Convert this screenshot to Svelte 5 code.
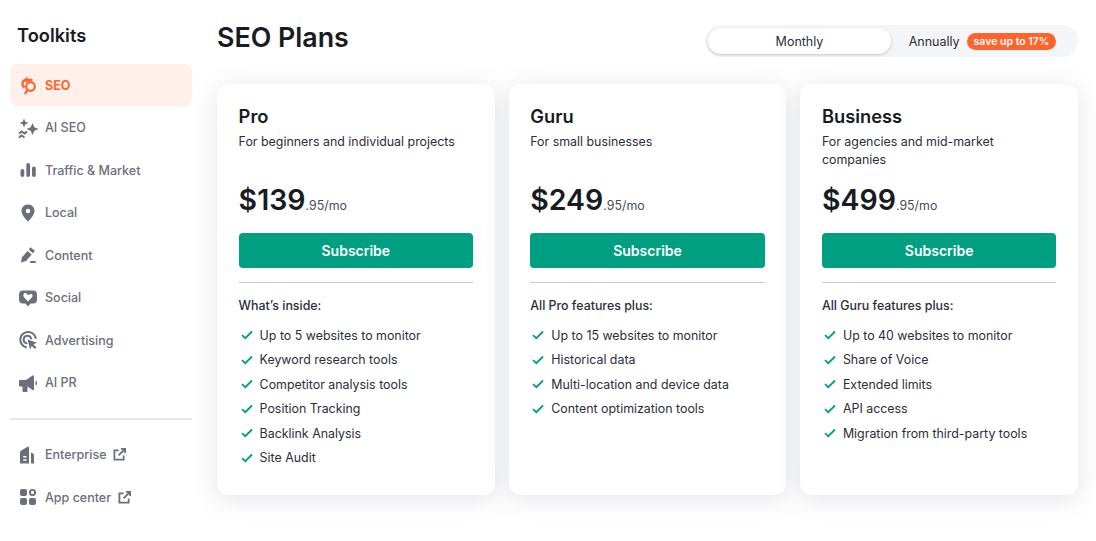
<script lang="ts">
  type Plan = { name: string; desc: string; price: string; lead: string; features: string[] };

  const nav = [
    { id: 'seo', label: 'SEO' },
    { id: 'ai', label: 'AI SEO' },
    { id: 'traffic', label: 'Traffic & Market' },
    { id: 'local', label: 'Local' },
    { id: 'content', label: 'Content' },
    { id: 'social', label: 'Social' },
    { id: 'ads', label: 'Advertising' },
    { id: 'pr', label: 'AI PR' }
  ];
  const extras = [
    { id: 'enterprise', label: 'Enterprise' },
    { id: 'apps', label: 'App center' }
  ];

  const plans: Plan[] = [
    {
      name: 'Pro',
      desc: 'For beginners and individual projects',
      price: '$139',
      lead: 'What’s inside:',
      features: ['Up to 5 websites to monitor', 'Keyword research tools', 'Competitor analysis tools', 'Position Tracking', 'Backlink Analysis', 'Site Audit']
    },
    {
      name: 'Guru',
      desc: 'For small businesses',
      price: '$249',
      lead: 'All Pro features plus:',
      features: ['Up to 15 websites to monitor', 'Historical data', 'Multi-location and device data', 'Content optimization tools']
    },
    {
      name: 'Business',
      desc: 'For agencies and mid-market companies',
      price: '$499',
      lead: 'All Guru features plus:',
      features: ['Up to 40 websites to monitor', 'Share of Voice', 'Extended limits', 'API access', 'Migration from third-party tools']
    }
  ];
</script>

{#snippet icon(id: string)}
  <svg class="ico" width="22" height="22" viewBox="0 0 22 22" aria-hidden="true">
    {#if id === 'seo'}
      <circle cx="13.500" cy="12.500" r="4.300" fill="none" stroke="currentColor" stroke-width="2.200" />
      <path d="M10.500 16.200l-2 3" fill="none" stroke="currentColor" stroke-width="2.400" stroke-linecap="round" />
      <path d="M7.500 13.500C4 11 5 6 9.500 6h6" fill="none" stroke="currentColor" stroke-width="2.300" />
      <path d="M10.500 2.500L6.500 6l4 3.500z" fill="currentColor" />
    {:else if id === 'ai'}
      <path d="M7 1.500l1.300 3.200 3.200 1.300-3.200 1.300L7 10.500 5.700 7.300 2.500 6l3.200-1.300zM15.500 6l1.800 4.200 4.200 1.800-4.200 1.800L15.500 18l-1.800-4.200L9.500 12l4.200-1.800z" fill="currentColor" />
      <path d="M2 16.500l2.500-2 3 2 2.500-2M2 20.500l2.500-2 3 2" fill="none" stroke="currentColor" stroke-width="2" />
    {:else if id === 'traffic'}
      <rect x="3.500" y="10" width="3.800" height="8" rx="1.900" fill="currentColor" />
      <rect x="9.300" y="4" width="3.800" height="14" rx="1.900" fill="currentColor" />
      <rect x="15" y="7.500" width="3.800" height="10.500" rx="1.900" fill="currentColor" />
    {:else if id === 'local'}
      <path fill-rule="evenodd" d="M11 2.500c-4 0-6.500 3-6.500 6.300 0 3.500 3 7.400 6.500 10.700 3.500-3.300 6.500-7.200 6.500-10.700 0-3.300-2.500-6.300-6.500-6.300zm0 4.200a2.300 2.300 0 110 4.600 2.300 2.300 0 010-4.600z" fill="currentColor" />
    {:else if id === 'content'}
      <path d="M4 18.500l.8-5 5.700-6.500 4.200 3.600-5.600 6.500zM11.700 5.600l2-2.300 4.200 3.600-2 2.300z" fill="currentColor" />
      <rect x="13" y="17" width="6" height="2" rx="1" fill="currentColor" />
    {:else if id === 'social'}
      <path fill-rule="evenodd" d="M6 3.500h10a4 4 0 014 4v5a4 4 0 01-4 4h-2.500L11 19.500l-2.500-3H6a4 4 0 01-4-4v-5a4 4 0 014-4zm5 11l4-4.200c1.800-2-.9-4.400-2.700-2.600L11 8.100l-1.300-1.400C7.900 4.900 5.200 7.300 7 10.300z" fill="currentColor" />
    {:else if id === 'ads'}
      <path d="M9 18.200A7.800 7.800 0 1118.700 9" fill="none" stroke="currentColor" stroke-width="2" stroke-linecap="round" />
      <path d="M9.500 14.300a3.800 3.800 0 114.600-4.700" fill="none" stroke="currentColor" stroke-width="2" stroke-linecap="round" />
      <path d="M10.500 10.500l9.500 3.200-3.700 1.600 3.200 3.200-1.600 1.600-3.200-3.200-1.600 3.700z" fill="currentColor" />
    {:else if id === 'pr'}
      <path d="M3 8h6l6.500-4.500h1.500v14.500h-1.500L10.500 14.500v4.500a1 1 0 01-1 1H6.500a1 1 0 01-1-1v-4.500H3a1 1 0 01-1-1V9a1 1 0 011-1z" fill="currentColor" />
      <path d="M18.500 8.500l1.500 1.300v2.400l-1.500 1.300z" fill="currentColor" />
    {:else if id === 'enterprise'}
      <path fill-rule="evenodd" d="M3.500 7L10.500 2.800a1 1 0 011.500.9V19.500H3.500a.5.5 0 01-.5-.5V8zm2.700 5v1.600h3.300V12zm0 3.200v1.600h3.300v-1.600z" fill="currentColor" />
      <path d="M14 8.500c2 .3 3 1.500 3 3.500v7.500h-3z" fill="currentColor" />
    {:else if id === 'apps'}
      <rect x="3" y="3" width="7" height="7" rx="2" fill="currentColor" />
      <circle cx="15.500" cy="6.500" r="2.600" fill="none" stroke="currentColor" stroke-width="1.900" />
      <rect x="3" y="12" width="7" height="7" rx="2" fill="currentColor" />
      <rect x="12" y="12" width="7" height="7" rx="2" fill="currentColor" />
    {/if}
  </svg>
{/snippet}

<div class="page">
  <aside class="side">
    <h2>Toolkits</h2>
    <nav class="nav">
      {#each nav as item, i (item.id)}
        <div class="item" class:active={i === 0}>
          {@render icon(item.id)}
          <span>{item.label}</span>
        </div>
      {/each}
    </nav>
    <hr />
    <div class="nav">
      {#each extras as item (item.id)}
        <div class="item">
          {@render icon(item.id)}
          <span>{item.label}</span>
          <svg class="ext" width="13" height="13" viewBox="0 0 14 14" fill="none" aria-hidden="true">
            <path d="M6 2.500H1.500v10h10V8M8.500 1h4.500v4.500M13 1L6 8" stroke="currentColor" stroke-width="1.900" />
          </svg>
        </div>
      {/each}
    </div>
  </aside>

  <main class="main">
    <header class="top">
      <h1>SEO Plans</h1>
      <div class="toggle">
        <div class="tab on">Monthly</div>
        <div class="tab">Annually <b class="save">save up to 17%</b></div>
      </div>
    </header>

    <section class="cards">
      {#each plans as plan (plan.name)}
        <article class="card">
          <h3>{plan.name}</h3>
          <p class="desc">{plan.desc}</p>
          <div class="price"><strong>{plan.price}</strong><span>.95/mo</span></div>
          <button class="sub">Subscribe</button>
          <div class="rule"></div>
          <div class="lead">{plan.lead}</div>
          <ul>
            {#each plan.features as f (f)}
              <li>
                <svg width="12" height="10" viewBox="0 0 12 10" fill="none" aria-hidden="true">
                  <path d="M1 5.200l3.300 3L11 1.500" stroke="#009f81" stroke-width="1.800" />
                </svg>
                {f}
              </li>
            {/each}
          </ul>
        </article>
      {/each}
    </section>
  </main>
</div>

<style>
  :global(body) { background: #fff; font-family: Inter, "Noto Sans", sans-serif; color: #191b23; }
  .page { display: flex; height: 541px; overflow: hidden; box-sizing: border-box; padding: 0 18px 0 10px; }

  .side { width: 182px; flex: none; }
  .side h2 { margin: 0; padding: 24px 0 0 7px; height: 39.750px; font-size: 18.300px; font-weight: 600; line-height: 23px; }
  .nav { display: grid; grid-auto-rows: 42.500px; }
  .item { display: flex; align-items: center; gap: 6px; padding-left: 7px; border-radius: 8px;
    font-size: 12.500px; font-weight: 500; color: #6c6e79; }
  .item .ico { flex: none; }
  .item.active { height: 42.500px; background: #fff0eb; color: #ff642d; font-weight: 700; }
  .ext { margin-left: 1px; }
  hr { margin: 13.750px 0 14px; border: 0; border-top: 2px solid #e6e7ea; }

  .main { flex: 1; min-width: 0; margin-left: 25px; }
  .top { display: flex; align-items: flex-start; justify-content: space-between; height: 84px; }
  h1 { margin: 21px 0 0; font-size: 26.800px; font-weight: 600; line-height: 33px; }
  .toggle { display: flex; width: 373px; height: 32px; margin-top: 25px; box-sizing: border-box; padding: 3px;
    background: #f4f5f9; border-radius: 16px; font-size: 12.500px; color: #2b2e38; }
  .tab { display: flex; align-items: center; justify-content: center; gap: 7px; border-radius: 13px; flex: 1; padding-right: 1px; }
  .tab.on { flex: none; width: 183px; padding: 0; background: #fff; box-shadow: 0 1px 3px rgba(25, 27, 35, 0.22); }
  .save { height: 17px; padding: 0 7px; border-radius: 9px; background: #ff642d; color: #fff;
    font-size: 10.500px; font-weight: 600; line-height: 17px; }

  .cards { display: grid; grid-template-columns: repeat(3, 1fr); gap: 14px; }
  .card { height: 411px; box-sizing: border-box; padding: 21px 21.600px 0; background: #fff; border-radius: 12px;
    box-shadow: 0 4px 24px rgba(100, 105, 130, 0.18); }
  .card h3 { margin: 0; font-size: 18.300px; font-weight: 600; line-height: 23px; }
  .desc { margin: 5px 0 0; height: 36px; font-size: 12.400px; line-height: 18px; color: #2b2e38; }
  .price { margin-top: 10px; height: 41px; line-height: 41px; }
  .price strong { font-size: 28.500px; font-weight: 600; }
  .price span { font-size: 12.400px; color: #4a4d58; }
  .sub { display: block; width: 100%; height: 35px; margin-top: 13px; padding-bottom: 2px; border: 0; border-radius: 4px;
    background: #009f81; color: #fff; font: 600 14px Inter, sans-serif; }
  .rule { margin-top: 14px; border-top: 1px solid #c9cad0; }
  .lead { margin-top: 15px; font-size: 12.400px; font-weight: 500; line-height: 16px; color: #2b2e38; }
  ul { margin: 9px 0 0; padding: 0; list-style: none; }
  li { display: flex; align-items: center; gap: 7px; height: 24.500px; padding-left: 2px;
    font-size: 12.400px; color: #2b2e38; }
  li svg { flex: none; }
</style>
